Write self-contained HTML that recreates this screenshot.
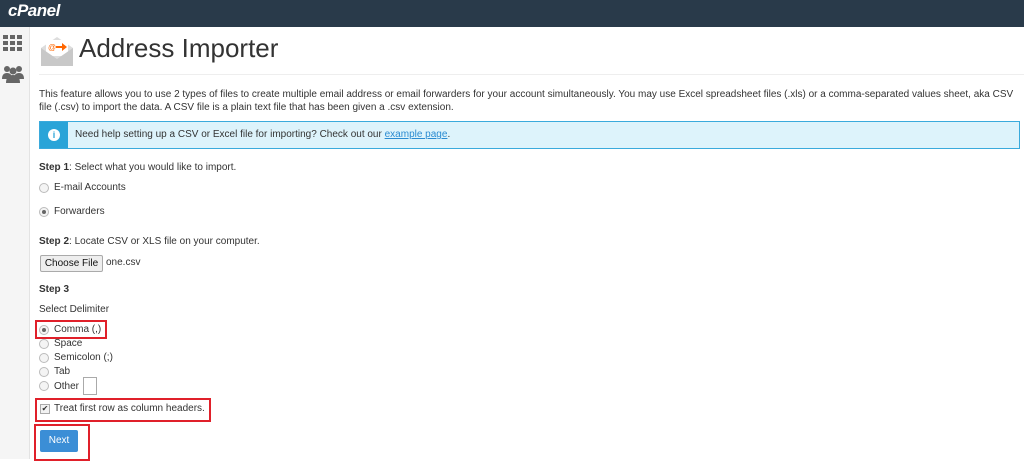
<!DOCTYPE html>
<html><head><style>
body{margin:0;width:1024px;height:459px;overflow:hidden;background:#fff;font-family:"Liberation Sans",sans-serif;color:#333;font-size:10px;position:relative}
.top{position:absolute;left:0;top:0;width:1024px;height:27px;background:#293a4a}
.logo{position:absolute;left:8px;top:1px;color:#fff;font-weight:bold;font-style:italic;font-size:17px;letter-spacing:-0.5px}
.side{position:absolute;left:0;top:27px;width:29px;height:432px;background:#f5f5f5;border-right:1px solid #e3e3e3}
.a{position:absolute;white-space:nowrap}
.r{position:absolute;width:8px;height:8px;border:1px solid #bbb;border-radius:50%;background:#f4f4f4}
.r.on::after{content:"";position:absolute;left:2px;top:2px;width:4px;height:4px;border-radius:50%;background:#666}
.box{position:absolute;border:2px solid #e0202a}
</style></head><body>
<div class="top"><div class="logo">cPanel</div></div>
<div class="side">
<svg style="position:absolute;left:3px;top:8px" width="20" height="16"><g fill="#666"><rect x="0" y="0" width="5" height="4"/><rect x="7" y="0" width="5" height="4"/><rect x="14" y="0" width="5" height="4"/><rect x="0" y="6" width="5" height="4"/><rect x="7" y="6" width="5" height="4"/><rect x="14" y="6" width="5" height="4"/><rect x="0" y="12" width="5" height="4"/><rect x="7" y="12" width="5" height="4"/><rect x="14" y="12" width="5" height="4"/></g></svg>
<svg style="position:absolute;left:2px;top:38px" width="22" height="18"><g fill="#666"><circle cx="5" cy="4" r="3"/><circle cx="17" cy="4" r="3"/><circle cx="11" cy="6" r="3.5"/><path d="M0 14q0-6 5-6t5 6z"/><path d="M12 14q0-6 5-6t5 6z"/><path d="M4 18q0-8 7-8t7 8z"/></g></svg>
</div>
<svg style="position:absolute;left:40px;top:35px" width="34" height="32"><path d="M1 13L17 2 33 13V31H1z" fill="#ddd"/><rect x="6" y="5" width="22" height="16" fill="#fff"/><path d="M1 13L17 24 33 13V31H1z" fill="#c8c8c8"/><text x="8" y="15" font-size="8" fill="#f60" font-family="Liberation Sans">@</text><path d="M16 11h6v-3l5 4-5 4v-3h-6z" fill="#f60"/></svg>
<div class="a" style="left:79px;top:33px;font-size:26px;color:#333">Address Importer</div>
<div style="position:absolute;left:39px;top:74px;width:985px;border-top:1px solid #eee"></div>
<div class="a" style="left:39px;top:88px;line-height:13px;white-space:normal;width:985px">This feature allows you to use 2 types of files to create multiple email address or email forwarders for your account simultaneously. You may use Excel spreadsheet files (.xls) or a comma-separated values sheet, aka CSV file (.csv) to import the data. A CSV file is a plain text file that has been given a .csv extension.</div>
<div style="position:absolute;left:39px;top:121px;width:979px;height:26px;background:#ddf3fb;border:1px solid #3aaadc"></div>
<div style="position:absolute;left:40px;top:122px;width:28px;height:26px;background:#2aa4d8"></div>
<div style="position:absolute;left:48px;top:129px;width:12px;height:12px;border-radius:50%;background:#fff;color:#2aa4d8;font-weight:bold;font-size:9px;text-align:center;line-height:12px">i</div>
<div class="a" style="left:75px;top:129px">Need help setting up a CSV or Excel file for importing? Check out our <span style="color:#2a8bd1;text-decoration:underline">example page</span>.</div>
<div class="a" style="left:39px;top:162px"><b>Step 1</b>: Select what you would like to import.</div>
<div class="r" style="left:39px;top:183px"></div><div class="a" style="left:54px;top:182px">E-mail Accounts</div>
<div class="r on" style="left:39px;top:207px"></div><div class="a" style="left:54px;top:206px">Forwarders</div>
<div class="a" style="left:39px;top:236px"><b>Step 2</b>: Locate CSV or XLS file on your computer.</div>
<div class="a" style="left:40px;top:255px;width:61px;height:15px;border:1px solid #aaa;border-radius:2px;background:#eee;color:#111;text-align:center;line-height:15px">Choose File</div>
<div class="a" style="left:106px;top:257px">one.csv</div>
<div class="a" style="left:39px;top:284px;font-weight:bold">Step 3</div>
<div class="a" style="left:39px;top:304px">Select Delimiter</div>
<div class="r on" style="left:39px;top:325px"></div><div class="a" style="left:54px;top:324px">Comma (,)</div>
<div class="r" style="left:39px;top:339px"></div><div class="a" style="left:54px;top:338px">Space</div>
<div class="r" style="left:39px;top:353px"></div><div class="a" style="left:54px;top:352px">Semicolon (;)</div>
<div class="r" style="left:39px;top:367px"></div><div class="a" style="left:54px;top:366px">Tab</div>
<div class="r" style="left:39px;top:381px"></div><div class="a" style="left:54px;top:381px">Other</div>
<div style="position:absolute;left:83px;top:377px;width:12px;height:16px;border:1px solid #aaa"></div>
<div style="position:absolute;left:40px;top:404px;width:8px;height:8px;border:1px solid #aaa;background:#f2f2f2;font-size:8px;line-height:8px;text-align:center">✔</div>
<div class="a" style="left:54px;top:403px">Treat first row as column headers.</div>
<div style="position:absolute;left:40px;top:430px;width:38px;height:22px;background:#3b8ed6;border-radius:2px;color:#fff;text-align:center;line-height:22px">Next</div>
<div class="box" style="left:35px;top:320px;width:68px;height:15px"></div>
<div class="box" style="left:35px;top:398px;width:172px;height:20px"></div>
<div class="box" style="left:34px;top:424px;width:52px;height:33px"></div>
</body></html>
